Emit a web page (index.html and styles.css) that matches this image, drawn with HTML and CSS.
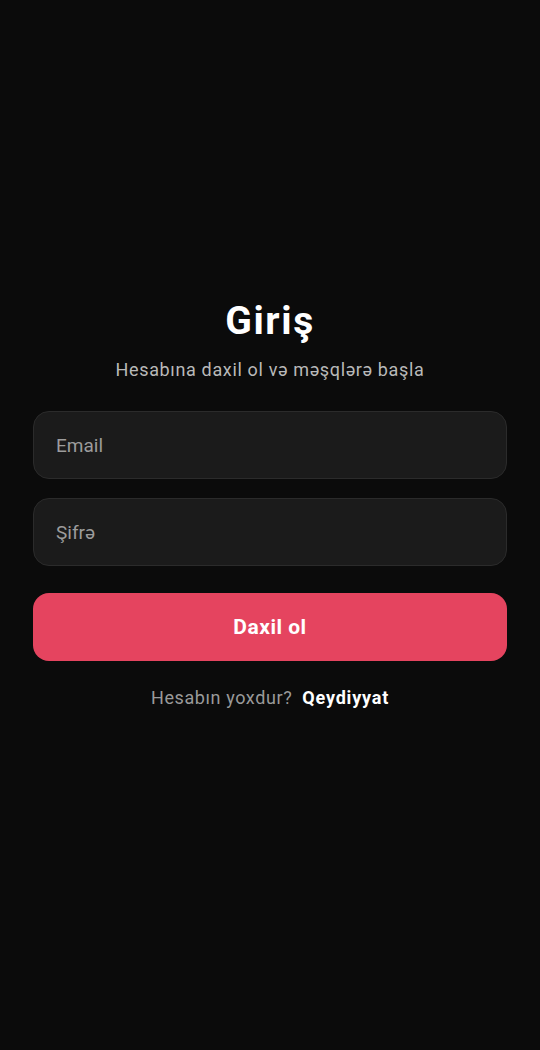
FILE: index.html
```html
<!DOCTYPE html>
<html lang="az">
<head>
<meta charset="utf-8">
<title>Giriş</title>
<link rel="stylesheet" href="styles.css">
</head>
<body>
<main class="screen">
  <h1 class="title">Giriş</h1>
  <p class="subtitle">Hesabına daxil ol və məşqlərə başla</p>
  <form class="form">
    <input class="field" type="email" placeholder="Email">
    <input class="field field-pass" type="password" placeholder="Şifrə">
    <button class="btn" type="button">Daxil ol</button>
  </form>
  <p class="signup">Hesabın yoxdur?<a class="signup-link" href="#">Qeydiyyat</a></p>
</main>
</body>
</html>
```
FILE: styles.css
```css
html, body {
  margin: 0;
  padding: 0;
  background: #0b0b0b;
}
body {
  font-family: Roboto, "Noto Sans", sans-serif;
  color: #fff;
  width: 540px;
  height: 1050px;
  overflow: hidden;
}
.screen {
  display: flex;
  flex-direction: column;
  align-items: center;
  padding: 299px 33px 0;
}
.title {
  margin: 0;
  font-size: 39px;
  line-height: 44px;
  font-weight: 700;
  letter-spacing: 1.6px;
  color: #fff;
}
.subtitle {
  margin: 15px 0 0;
  font-size: 18px;
  line-height: 24px;
  letter-spacing: 0.65px;
  color: #b9b9b9;
}
.form {
  width: 100%;
  margin-top: 29px;
  display: flex;
  flex-direction: column;
}
.field {
  box-sizing: border-box;
  width: 100%;
  height: 68px;
  border: 1px solid #2b2b2b;
  border-radius: 16px;
  background: #1b1b1b;
  padding: 0 22px;
  font-family: inherit;
  font-size: 19px;
  color: #fff;
  outline: none;
}
.field::placeholder {
  color: #9c9c9c;
}
.field-pass {
  margin-top: 19px;
}
.btn {
  margin-top: 27px;
  height: 68px;
  border: none;
  border-radius: 16px;
  background: #e5445f;
  color: #fff;
  font-family: inherit;
  font-size: 21px;
  font-weight: 700;
  letter-spacing: 0.5px;
}
.signup {
  margin: 25px 0 0;
  font-size: 18px;
  line-height: 24px;
  letter-spacing: 0.6px;
  color: #9a9a9a;
}
.signup-link {
  margin-left: 10px;
  color: #fff;
  font-weight: 700;
  letter-spacing: 0.8px;
  text-decoration: none;
}
```
